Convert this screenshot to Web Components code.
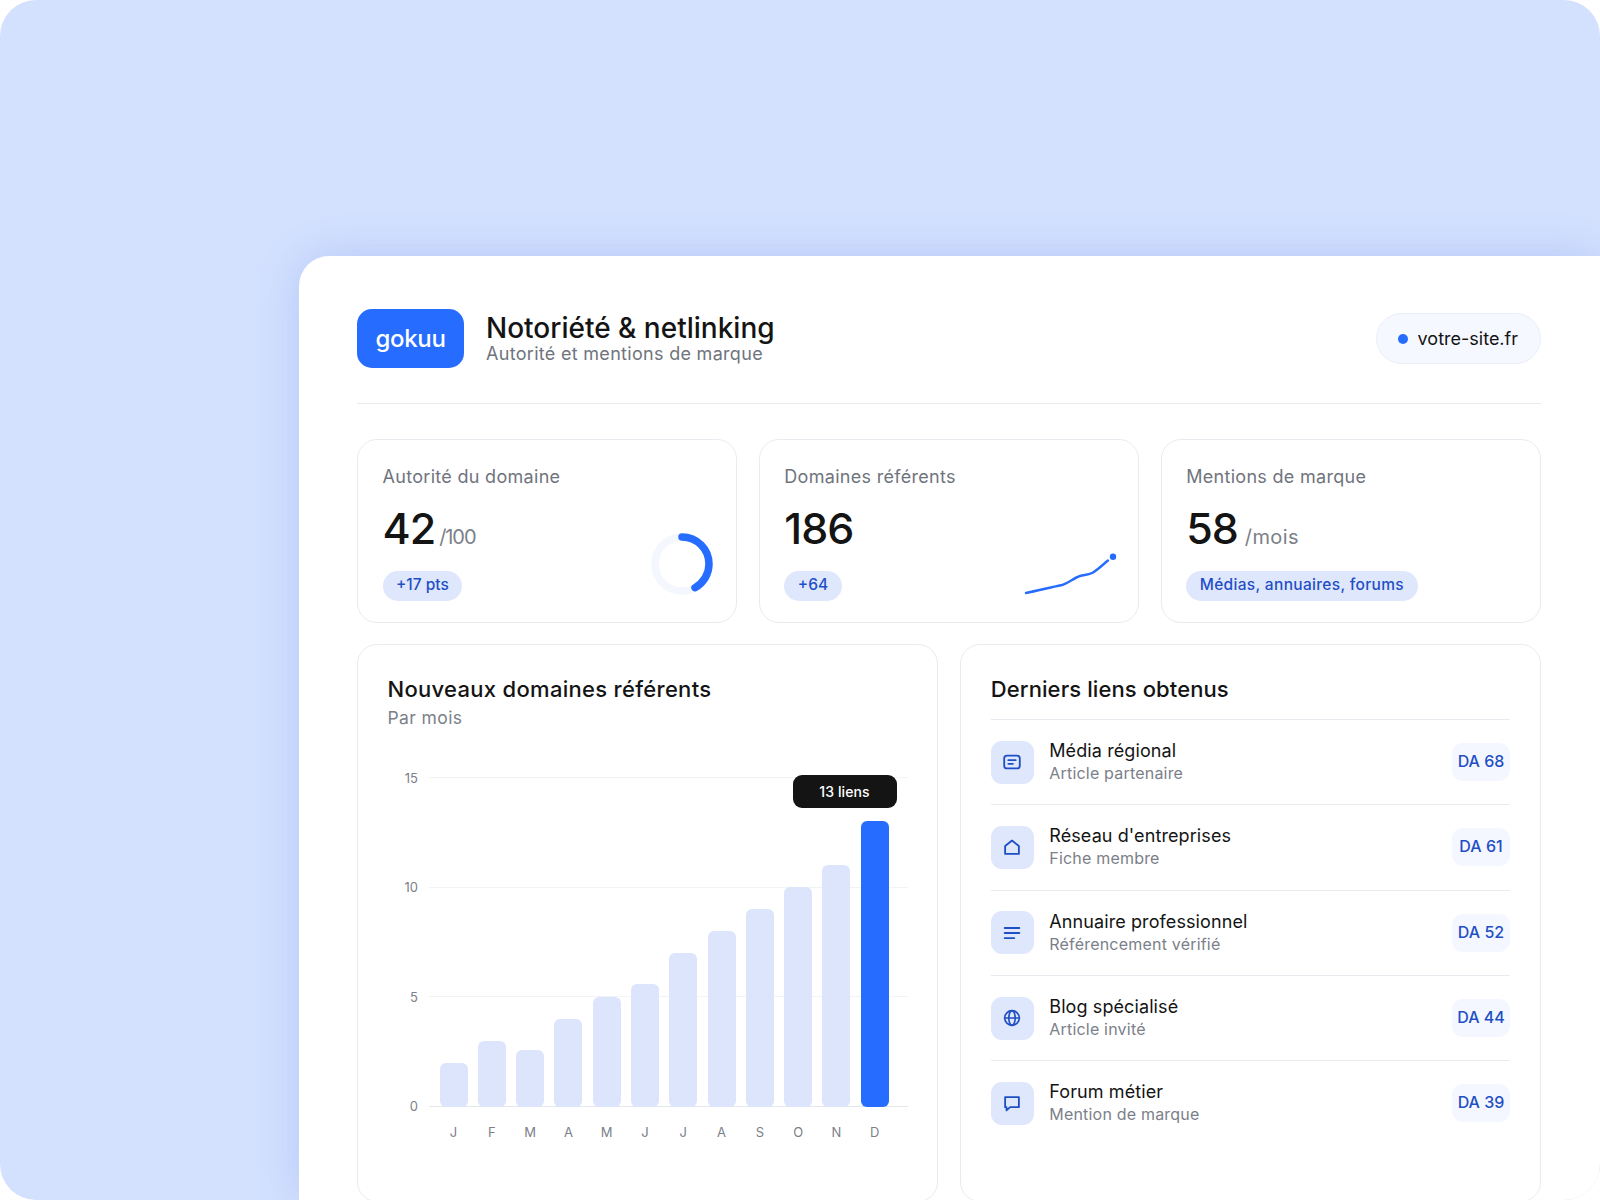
<!DOCTYPE html>
<html lang="fr">
<head>
<meta charset="utf-8">
<title>Notoriété & netlinking</title>
<style>
  html, body { margin: 0; background: #fff; }
  body { font-family: Inter, "Liberation Sans", sans-serif; color: #141414; }
</style>
</head>
<body>
<dash-stage>
  <dash-panel>
    <dash-header>
      <span slot="logo">gokuu</span>
      <span slot="title">Notoriété &amp; netlinking</span>
      <span slot="sub">Autorité et mentions de marque</span>
      <span slot="site">votre-site.fr</span>
    </dash-header>
    <stat-row>
      <stat-card>
        <span slot="label">Autorité du domaine</span>
        <span slot="value">42</span>
        <span slot="unit" style="letter-spacing:-1.1px;margin-left:-3px">/100</span>
        <span slot="pill">+17 pts</span>
        <svg slot="visual" width="62" height="62" viewBox="0 0 62 62" style="margin:0 -1px 6px 0">
          <circle cx="31" cy="31" r="27" fill="none" stroke="#f4f7fe" stroke-width="7.5"/>
          <circle cx="31" cy="31" r="27" fill="none" stroke="#266cff" stroke-width="7.5" stroke-linecap="round" pathLength="100" stroke-dasharray="42 100" transform="rotate(-90 31 31)"/>
        </svg>
      </stat-card>
      <stat-card>
        <span slot="label">Domaines référents</span>
        <span slot="value">186</span>
        <span slot="pill">+64</span>
        <svg slot="visual" width="94" height="46" viewBox="0 0 94 46" style="margin:0 -3.500px 4.500px 0">
          <path d="M2 42 C14 39.500 26 36.500 38 34 C44 32.500 50 27 56 25 C60 23.800 64 24 68 22 C73 19.500 79 13.500 84 9.500" fill="none" stroke="#266cff" stroke-width="2.400" stroke-linecap="round"/>
          <circle cx="89" cy="5.800" r="3.200" fill="#266cff"/>
        </svg>
      </stat-card>
      <stat-card>
        <span slot="label">Mentions de marque</span>
        <span slot="value">58</span>
        <span slot="unit" style="letter-spacing:.4px">/mois</span>
        <span slot="pill" style="letter-spacing:.33px">Médias, annuaires, forums</span>
      </stat-card>
    </stat-row>
    <lower-row>
      <chart-card>
        <span slot="title">Nouveaux domaines référents</span>
        <span slot="sub">Par mois</span>
      </chart-card>
      <links-card>
        <span slot="title">Derniers liens obtenus</span>
        <link-row>
          <svg slot="icon" viewBox="0 0 24 24"><rect x="3.500" y="5" width="17" height="14" rx="3"/><path d="M8 10h8M8 14h5"/></svg>
          <span slot="name">Média régional</span><span slot="sub">Article partenaire</span><span slot="da">DA 68</span>
        </link-row>
        <link-row>
          <svg slot="icon" viewBox="0 0 24 24"><path d="M4.500 19.500V11L12 5l7.500 6v8.500z"/></svg>
          <span slot="name">Réseau d'entreprises</span><span slot="sub">Fiche membre</span><span slot="da">DA 61</span>
        </link-row>
        <link-row>
          <svg slot="icon" viewBox="0 0 24 24"><path d="M4 6.500h16M4 12h16M4 17.500h10.500"/></svg>
          <span slot="name">Annuaire professionnel</span><span slot="sub">Référencement vérifié</span><span slot="da">DA 52</span>
        </link-row>
        <link-row>
          <svg slot="icon" viewBox="0 0 24 24" style="stroke-width:1.800"><circle cx="12" cy="12" r="8"/><ellipse cx="12" cy="12" rx="3.500" ry="8"/><path d="M4 12h16"/></svg>
          <span slot="name">Blog spécialisé</span><span slot="sub">Article invité</span><span slot="da">DA 44</span>
        </link-row>
        <link-row>
          <svg slot="icon" viewBox="0 0 24 24"><path d="M4.500 5.500h15v11H10l-4 3.500v-3.500H4.500z"/></svg>
          <span slot="name">Forum métier</span><span slot="sub">Mention de marque</span><span slot="da">DA 39</span>
        </link-row>
      </links-card>
    </lower-row>
  </dash-panel>
</dash-stage>

<script>
class BaseElement extends HTMLElement {
    constructor() {
        super();
        this.attachShadow({ mode: 'open' });
    }

    connectedCallback() {
        const template = document.createElement('template');
        template.innerHTML = this.markup();
        this.shadowRoot.appendChild(template.content.cloneNode(true));
    }
}

class DashStage extends BaseElement {
    markup() {
        return `
            <style>
                :host {
                    display: block;
                    height: 1200px;
                    box-sizing: border-box;
                    padding: 256px 0 0 299px;
                    background: #d3e1fe;
                    border-radius: 36px;
                    overflow: hidden;
                }
            </style>
            <slot></slot>
        `;
    }
}

class DashPanel extends BaseElement {
    markup() {
        return `
            <style>
                :host {
                    display: block;
                    height: 944px;
                    box-sizing: border-box;
                    padding: 53px 59px 0 58px;
                    background: #fff;
                    border-radius: 30px 0 0 0;
                    box-shadow: 0 0 44px rgba(60, 100, 225, .2);
                    overflow: hidden;
                }
            </style>
            <slot></slot>
        `;
    }
}

class DashHeader extends BaseElement {
    markup() {
        return `
            <style>
                :host {
                    display: flex;
                    align-items: center;
                    height: 59px;
                    padding-bottom: 35px;
                    border-bottom: 1.5px solid #e9ebf0;
                }
                .logo {
                    width: 107px;
                    height: 59px;
                    flex: none;
                    display: flex;
                    align-items: center;
                    justify-content: center;
                    border-radius: 15px;
                    background: #266cff;
                    color: #fff;
                    font-size: 24px;
                    font-weight: 500;
                    letter-spacing: -.3px;
                }
                .text {
                    margin-left: 22px;
                    display: flex;
                    flex-direction: column;
                }
                .title {
                    font-size: 28px;
                    line-height: 32px;
                    font-weight: 500;
                }
                .sub {
                    font-size: 18px;
                    line-height: 22px;
                    margin-top: -1px;
                    color: #6f747d;
                    letter-spacing: .3px;
                }
                .site {
                    margin-left: auto;
                    display: flex;
                    align-items: center;
                    height: 51px;
                    box-sizing: border-box;
                    padding: 0 22px 0 21px;
                    border: 1.5px solid #e8edf7;
                    border-radius: 26px;
                    background: #f5f8ff;
                    font-size: 18px;
                }
                .dot {
                    width: 10px;
                    height: 10px;
                    border-radius: 50%;
                    background: #266cff;
                    margin-right: 10px;
                }
            </style>
            <div class="logo"><slot name="logo"></slot></div>
            <div class="text">
                <span class="title"><slot name="title"></slot></span>
                <span class="sub"><slot name="sub"></slot></span>
            </div>
            <div class="site"><span class="dot"></span><slot name="site"></slot></div>
        `;
    }
}

class StatRow extends BaseElement {
    markup() {
        return `
            <style>
                :host {
                    display: grid;
                    grid-template-columns: repeat(3, 1fr);
                    gap: 21.500px;
                    margin-top: 35px;
                    height: 184px;
                }
            </style>
            <slot></slot>
        `;
    }
}

class StatCard extends BaseElement {
    markup() {
        return `
            <style>
                :host {
                    display: flex;
                    box-sizing: border-box;
                    padding: 25px 24px 21px 24.500px;
                    border: 1.5px solid #e9ebf0;
                    border-radius: 20px;
                    background: #fff;
                }
                .left {
                    flex: 1;
                    display: flex;
                    flex-direction: column;
                    align-items: flex-start;
                }
                .label {
                    font-size: 18px;
                    line-height: 24px;
                    letter-spacing: .3px;
                    color: #6f747d;
                }
                .value {
                    display: flex;
                    align-items: baseline;
                    margin-top: 13px;
                    height: 52px;
                    line-height: 52px;
                }
                .num {
                    font-size: 43px;
                    font-weight: 500;
                    letter-spacing: -1px;
                }
                .unit {
                    margin-left: 7px;
                    font-size: 20px;
                    color: #7b8089;
                }
                .pill {
                    margin-top: auto;
                    height: 30px;
                    box-sizing: border-box;
                    padding: 0 13.500px 4px;
                    display: flex;
                    align-items: center;
                    border-radius: 15px;
                    background: #dfe7fd;
                    color: #1f4fc4;
                    font-size: 15.500px;
                    font-weight: 500;
                }
                .visual { align-self: flex-end; display: flex; }
            </style>
            <div class="left">
                <span class="label"><slot name="label"></slot></span>
                <div class="value">
                    <span class="num"><slot name="value"></slot></span>
                    <span class="unit"><slot name="unit"></slot></span>
                </div>
                <span class="pill"><slot name="pill"></slot></span>
            </div>
            <div class="visual"><slot name="visual"></slot></div>
        `;
    }
}

class LowerRow extends BaseElement {
    markup() {
        return `
            <style>
                :host {
                    display: grid;
                    grid-template-columns: 1fr 1fr;
                    gap: 21.500px;
                    margin-top: 21px;
                    height: 558px;
                }
            </style>
            <slot></slot>
        `;
    }
}

const MONTHS = [
    ['J', 2], ['F', 3], ['M', 2.6], ['A', 4], ['M', 5], ['J', 5.6],
    ['J', 7], ['A', 8], ['S', 9], ['O', 10], ['N', 11], ['D', 13]
];

class ChartCard extends BaseElement {
    markup() {
        const bars = MONTHS.map(([, v], i) =>
            `<i class="bar${i === 11 ? ' hot' : ''}" style="height:${v * 22}px"></i>`).join('');
        const labels = MONTHS.map(([m]) => `<span>${m}</span>`).join('');
        const ticks = [15, 10, 5, 0].map(n => `<span class="tick">${n}</span>`).join('');
        return `
            <style>
                :host {
                    display: block;
                    box-sizing: border-box;
                    padding: 28.500px 29.500px 0 29.500px;
                    border: 1.5px solid #e9ebf0;
                    border-radius: 20px;
                    background: #fff;
                }
                .title {
                    display: block;
                    font-size: 22px;
                    line-height: 30px;
                    font-weight: 500;
                    letter-spacing: .3px;
                }
                .sub {
                    display: block;
                    margin-top: 2px;
                    font-size: 17.500px;
                    line-height: 24px;
                    letter-spacing: .4px;
                    color: #7b8089;
                }
                .chart {
                    display: grid;
                    grid-template-columns: 30.500px 1fr;
                    column-gap: 10.500px;
                    margin-top: 47.500px;
                }
                .axis, .lines {
                    height: 330px;
                    display: flex;
                    flex-direction: column;
                    justify-content: space-between;
                }
                .tick {
                    height: 1px;
                    display: flex;
                    align-items: center;
                    justify-content: flex-end;
                    font-size: 13px;
                    color: #7b8089;
                }
                .plot { display: grid; position: relative; }
                .lines, .bars { grid-area: 1 / 1; }
                .lines i { display: block; height: 1px; background: #f1f3f7; }
                .lines i:last-child { background: #e4e7ee; }
                .bars, .months {
                    display: flex;
                    gap: 10.300px;
                    padding-left: 11px;
                }
                .bars { align-items: flex-end; height: 330px; }
                .bar {
                    display: block;
                    width: 28px;
                    flex: none;
                    border-radius: 6px;
                    background: #dce5fc;
                }
                .bar.hot { background: #266cff; }
                .months {
                    grid-column: 2;
                    margin-top: 17px;
                }
                .months span {
                    width: 28px;
                    flex: none;
                    text-align: center;
                    font-size: 13px;
                    line-height: 16px;
                    color: #7b8089;
                }
                .tip {
                    position: absolute;
                    left: 364px;
                    top: -2.500px;
                    width: 104px;
                    height: 33px;
                    display: flex;
                    align-items: center;
                    justify-content: center;
                    border-radius: 9px;
                    background: #141414;
                    color: #fff;
                    font-size: 14px;
                    font-weight: 500;
                    letter-spacing: .1px;
                }
            </style>
            <span class="title"><slot name="title"></slot></span>
            <span class="sub"><slot name="sub"></slot></span>
            <div class="chart">
                <div class="axis">${ticks}</div>
                <div class="plot">
                    <div class="lines"><i></i><i></i><i></i><i></i></div>
                    <div class="bars">${bars}</div>
                    <div class="tip">13 liens</div>
                </div>
                <div class="months">${labels}</div>
            </div>
        `;
    }
}

class LinksCard extends BaseElement {
    markup() {
        return `
            <style>
                :host {
                    display: block;
                    box-sizing: border-box;
                    padding: 28.500px 30px 0 30px;
                    border: 1.5px solid #e9ebf0;
                    border-radius: 20px;
                    background: #fff;
                }
                .title {
                    display: block;
                    font-size: 22px;
                    line-height: 30px;
                    font-weight: 500;
                    letter-spacing: .1px;
                    margin-bottom: 15.500px;
                }
            </style>
            <span class="title"><slot name="title"></slot></span>
            <slot></slot>
        `;
    }
}

class LinkRow extends BaseElement {
    markup() {
        return `
            <style>
                :host {
                    display: flex;
                    align-items: center;
                    height: 85.300px;
                    box-sizing: border-box;
                    border-top: 1.5px solid #e9ebf0;
                }
                .icon {
                    width: 43px;
                    height: 43px;
                    flex: none;
                    display: flex;
                    align-items: center;
                    justify-content: center;
                    border-radius: 11px;
                    background: #dfe7fd;
                }
                ::slotted(svg) {
                    width: 22px;
                    height: 22px;
                    fill: none;
                    stroke: #1f4fc4;
                    stroke-width: 2;
                    stroke-linecap: round;
                    stroke-linejoin: round;
                }
                .text {
                    margin-left: 15.500px;
                    display: flex;
                    flex-direction: column;
                }
                .name { font-size: 18px; line-height: 23px; letter-spacing: .1px; }
                .sub { font-size: 16px; line-height: 23px; letter-spacing: .2px; color: #7b8089; }
                .da {
                    margin-left: auto;
                    min-width: 58px;
                    height: 38px;
                    box-sizing: border-box;
                    padding-bottom: 2px;
                    display: flex;
                    align-items: center;
                    justify-content: center;
                    border-radius: 11px;
                    background: #f4f7ff;
                    color: #1f4fc4;
                    font-size: 16px;
                    font-weight: 500;
                }
            </style>
            <div class="icon"><slot name="icon"></slot></div>
            <div class="text">
                <span class="name"><slot name="name"></slot></span>
                <span class="sub"><slot name="sub"></slot></span>
            </div>
            <span class="da"><slot name="da"></slot></span>
        `;
    }
}

customElements.define('dash-stage', DashStage);
customElements.define('dash-panel', DashPanel);
customElements.define('dash-header', DashHeader);
customElements.define('stat-row', StatRow);
customElements.define('stat-card', StatCard);
customElements.define('lower-row', LowerRow);
customElements.define('chart-card', ChartCard);
customElements.define('links-card', LinksCard);
customElements.define('link-row', LinkRow);
</script>
</body>
</html>
